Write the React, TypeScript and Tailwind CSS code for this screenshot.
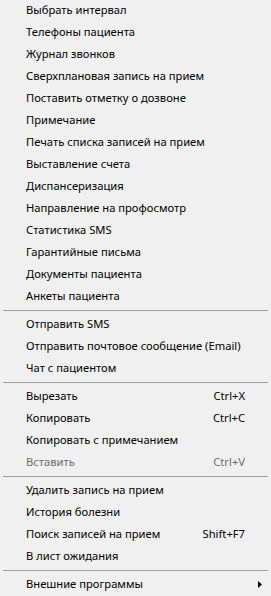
type Item = {
  label: string;
  shortcut?: string;
  disabled?: boolean;
  submenu?: boolean;
};

// groups are split by separators
const groups: Item[][] = [
  [
    { label: "Выбрать интервал" },
    { label: "Телефоны пациента" },
    { label: "Журнал звонков" },
    { label: "Сверхплановая запись на прием" },
    { label: "Поставить отметку о дозвоне" },
    { label: "Примечание" },
    { label: "Печать списка записей на прием" },
    { label: "Выставление счета" },
    { label: "Диспансеризация" },
    { label: "Направление на профосмотр" },
    { label: "Статистика SMS" },
    { label: "Гарантийные письма" },
    { label: "Документы пациента" },
    { label: "Анкеты пациента" },
  ],
  [
    { label: "Отправить SMS" },
    { label: "Отправить почтовое сообщение (Email)" },
    { label: "Чат с пациентом" },
  ],
  [
    { label: "Вырезать", shortcut: "Ctrl+X" },
    { label: "Копировать", shortcut: "Ctrl+C" },
    { label: "Копировать с примечанием" },
    { label: "Вставить", shortcut: "Ctrl+V", disabled: true },
  ],
  [
    { label: "Удалить запись на прием" },
    { label: "История болезни" },
    { label: "Поиск записей на прием", shortcut: "Shift+F7" },
    { label: "В лист ожидания" },
  ],
  [{ label: "Внешние программы", submenu: true }],
];

const MenuRow = ({ item }: { item: Item }) => (
  <div
    className={`relative flex h-[22px] items-center justify-between whitespace-nowrap pl-[26px] pr-[26px] ${
      item.disabled ? "text-[#6d6d6d]" : "text-black"
    }`}
  >
    <span>{item.label}</span>
    {item.shortcut && <span>{item.shortcut}</span>}
    {item.submenu && (
      <svg
        className="absolute right-[9px] top-[8px]"
        width="4"
        height="7"
        viewBox="0 0 4 7"
      >
        <path d="M0 0L4 3.5L0 7Z" fill="#000" />
      </svg>
    )}
  </div>
);

export default function App() {
  return (
    <div
      className="h-[596px] w-[271px] overflow-hidden bg-[#f0f0f0] text-[11.2px] leading-none"
      style={{ fontFamily: '"Noto Sans", "Open Sans", sans-serif' }}
    >
      <div className="-mt-px">
        {groups.map((group, gi) => (
          <div key={gi}>
            {gi > 0 && (
              <div className="flex h-[6px] items-center px-[3px]">
                <div className="h-px w-full bg-[#a0a0a0]" />
              </div>
            )}
            {group.map((item) => (
              <MenuRow key={item.label} item={item} />
            ))}
          </div>
        ))}
      </div>
    </div>
  );
}
